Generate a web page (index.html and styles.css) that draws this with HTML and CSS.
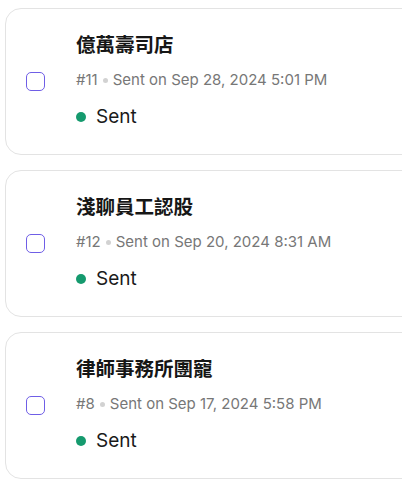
FILE: index.html
```html
<!DOCTYPE html>
<html lang="zh-Hant">
<head>
<meta charset="utf-8">
<link rel="stylesheet" href="styles.css">
</head>
<body>
<div class="list">
  <div class="card">
    <span class="checkbox"></span>
    <div class="content">
      <div class="title">億萬壽司店</div>
      <div class="meta">#11<span class="sep"></span>Sent on Sep 28, 2024 5:01 PM</div>
      <div class="status"><span class="dot"></span>Sent</div>
    </div>
  </div>
  <div class="card">
    <span class="checkbox"></span>
    <div class="content">
      <div class="title">淺聊員工認股</div>
      <div class="meta">#12<span class="sep"></span>Sent on Sep 20, 2024 8:31 AM</div>
      <div class="status"><span class="dot"></span>Sent</div>
    </div>
  </div>
  <div class="card">
    <span class="checkbox"></span>
    <div class="content">
      <div class="title">律師事務所團寵</div>
      <div class="meta">#8<span class="sep"></span>Sent on Sep 17, 2024 5:58 PM</div>
      <div class="status"><span class="dot"></span>Sent</div>
    </div>
  </div>
</div>
</body>
</html>
```
FILE: styles.css
```css
html, body {
  margin: 0;
  padding: 0;
  background: #ffffff;
  overflow: hidden;
}
body {
  font-family: Inter, "Noto Sans CJK TC", sans-serif;
  color: #1a1a1a;
}
.list {
  display: flex;
  flex-direction: column;
  gap: 15px;
  padding: 8px 0 0 5px;
  width: 440px;
}
.card {
  display: flex;
  align-items: center;
  border: 1px solid #e3e3e3;
  border-radius: 16px;
  padding: 0 0 0 20px;
  background: #fff;
}
.checkbox {
  width: 17px;
  height: 17px;
  border: 1.5px solid #6f5ee6;
  border-radius: 5px;
  flex: none;
  margin-right: 31px;
}
.content {
  display: flex;
  flex-direction: column;
  padding: 21px 0 23px;
}
.title {
  font-family: "Noto Sans CJK TC", sans-serif;
  font-weight: 700;
  font-size: 19.5px;
  line-height: 28px;
  color: #161616;
}
.meta {
  margin-top: 12px;
  font-size: 15px;
  line-height: 20px;
  color: #777777;
  display: flex;
  align-items: center;
}
.sep {
  width: 5px;
  height: 5px;
  border-radius: 50%;
  background: #d2d2d2;
  margin: 0 5px;
}
.status {
  margin-top: 13px;
  font-size: 19px;
  line-height: 28px;
  color: #1a1a1a;
  display: flex;
  align-items: center;
}
.dot {
  width: 10px;
  height: 10px;
  border-radius: 50%;
  background: #159a6e;
  margin-right: 10px;
}
```
